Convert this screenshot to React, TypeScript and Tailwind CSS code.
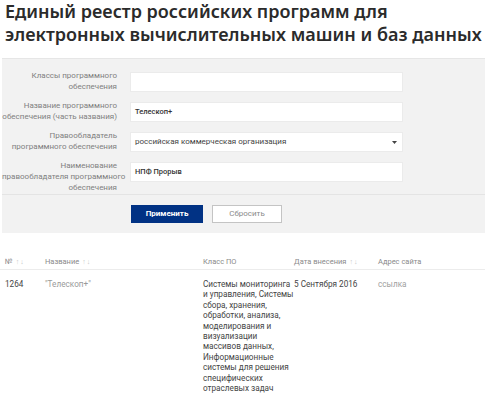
import React from "react"

const fields = [
  { label: ["Классы программного", "обеспечения"], value: "", kind: "input" },
  { label: ["Название программного", "обеспечения (часть названия)"], value: "Телескоп+", kind: "input" },
  { label: ["Правообладатель", "программного обеспечения"], value: "российская коммерческая организация", kind: "select" },
  { label: ["Наименование", "правообладателя программного", "обеспечения"], value: "НПФ Прорыв", kind: "input" },
]

const classLines = [
  "Системы мониторинга",
  "и управления, Системы",
  "сбора, хранения,",
  "обработки, анализа,",
  "моделирования и",
  "визуализации",
  "массивов данных,",
  "Информационные",
  "системы для решения",
  "специфических",
  "отраслевых задач",
]

function Sort() {
  return <span className="ml-[3px] text-[7px] text-[#c8c8c8] tracking-[1px]">↑↓</span>
}

export default function App() {
  return (
    <div className="w-[485px] h-[398px] overflow-hidden bg-white font-['Roboto',sans-serif] text-[#333]">
      <h1 className="px-[5px] h-[58px] text-[18px] leading-[23px] font-semibold text-[#2b2b2b] font-['Noto_Sans',sans-serif] whitespace-nowrap">
        <div>Единый реестр российских программ для</div>
        <div>электронных вычислительных машин и баз данных</div>
      </h1>

      <div className="ml-[2px] bg-[#f2f2f2] border-t border-[#e6e6e6]">
        <div className="flex flex-col gap-[8px] pt-[11px]">
          {fields.map((f, i) => (
            <div key={i} className="flex items-start">
              <div className="w-[115px] text-right text-[8px] leading-[11px] text-[#808080] whitespace-nowrap">
                {f.label.map((l, j) => (
                  <div key={j}>{l}</div>
                ))}
              </div>
              <div className="ml-[13px] mt-[2px] w-[273px] h-[20px] bg-white border border-[#ebebeb] flex items-center px-[4px] text-[7.5px] text-[#333]">
                <span className={f.kind === "select" ? "flex-1 text-[8px] text-[#444]" : "flex-1 font-medium"}>{f.value}</span>
                {f.kind === "select" && (
                  <svg width="5" height="3" viewBox="0 0 5 3" className="mr-[1px]">
                    <path d="M0 0h5L2.5 3z" fill="#444" />
                  </svg>
                )}
              </div>
            </div>
          ))}
        </div>

        <div className="mt-[1px] border-t border-[#e4e4e4] flex gap-[9px] pl-[129px] pt-[10px] pb-[10px]">
          <button className="w-[72px] h-[18px] bg-[#013284] text-white text-[8px] font-bold">Применить</button>
          <button className="w-[70px] h-[18px] bg-white border border-[#c4c4c4] text-[#8a8a8a] text-[8px]">Сбросить</button>
        </div>
      </div>

      <div className="mt-[22px] grid grid-cols-[40px_158px_91px_84px_1fr] pl-[5px] text-[7.5px] text-[#8a8a8a] h-[13px] items-center border-b border-[#ececec] box-content pb-[1px]">
        <div>
          №<Sort />
        </div>
        <div>
          Название<Sort />
        </div>
        <div>Класс ПО</div>
        <div>
          Дата внесения<Sort />
        </div>
        <div>Адрес сайта</div>
      </div>

      <div className="grid grid-cols-[40px_158px_91px_84px_1fr] pl-[5px] pt-[9px] text-[8.2px] leading-[10.4px]">
        <div className="text-[#444]">1264</div>
        <div className="text-[#9a9a9a]">"Телескоп+"</div>
        <div className="text-[#444]">
          {classLines.map((l, i) => (
            <div key={i} className="whitespace-nowrap">{l}</div>
          ))}
        </div>
        <div className="text-[#444]">5 Сентября 2016</div>
        <div className="text-[#a0a0a0]">ссылка</div>
      </div>
    </div>
  )
}
